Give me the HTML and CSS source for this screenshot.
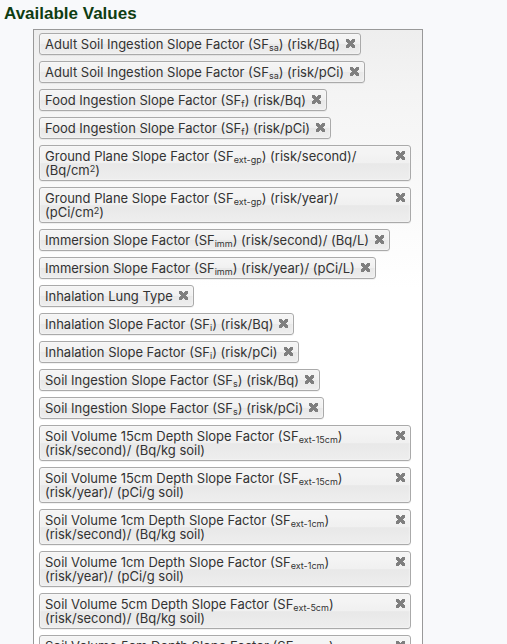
FILE: index.html
```html
<!DOCTYPE html>
<html>
<head>
<meta charset="utf-8">
<link rel="stylesheet" href="styles.css">
</head>
<body>
<h2 class="title">Available Values</h2>
<div class="choices">
  <div class="tag"><span class="label">Adult Soil Ingestion Slope Factor (SF<sub>sa</sub>) (risk/Bq)</span><span class="x"></span></div>
  <div class="tag"><span class="label">Adult Soil Ingestion Slope Factor (SF<sub>sa</sub>) (risk/pCi)</span><span class="x"></span></div>
  <div class="tag"><span class="label">Food Ingestion Slope Factor (SF<sub>f</sub>) (risk/Bq)</span><span class="x"></span></div>
  <div class="tag"><span class="label">Food Ingestion Slope Factor (SF<sub>f</sub>) (risk/pCi)</span><span class="x"></span></div>
  <div class="tag wide"><span class="label">Ground Plane Slope Factor (SF<sub>ext-gp</sub>) (risk/second)/ (Bq/cm<sup>2</sup>)</span><span class="x"></span></div>
  <div class="tag wide"><span class="label">Ground Plane Slope Factor (SF<sub>ext-gp</sub>) (risk/year)/ (pCi/cm<sup>2</sup>)</span><span class="x"></span></div>
  <div class="tag"><span class="label">Immersion Slope Factor (SF<sub>imm</sub>) (risk/second)/ (Bq/L)</span><span class="x"></span></div>
  <div class="tag"><span class="label">Immersion Slope Factor (SF<sub>imm</sub>) (risk/year)/ (pCi/L)</span><span class="x"></span></div>
  <div class="tag"><span class="label">Inhalation Lung Type</span><span class="x"></span></div>
  <div class="tag"><span class="label">Inhalation Slope Factor (SF<sub>i</sub>) (risk/Bq)</span><span class="x"></span></div>
  <div class="tag"><span class="label">Inhalation Slope Factor (SF<sub>i</sub>) (risk/pCi)</span><span class="x"></span></div>
  <div class="tag"><span class="label">Soil Ingestion Slope Factor (SF<sub>s</sub>) (risk/Bq)</span><span class="x"></span></div>
  <div class="tag"><span class="label">Soil Ingestion Slope Factor (SF<sub>s</sub>) (risk/pCi)</span><span class="x"></span></div>
  <div class="tag wide"><span class="label">Soil Volume 15cm Depth Slope Factor (SF<sub>ext-15cm</sub>) (risk/second)/ (Bq/kg soil)</span><span class="x"></span></div>
  <div class="tag wide"><span class="label">Soil Volume 15cm Depth Slope Factor (SF<sub>ext-15cm</sub>) (risk/year)/ (pCi/g soil)</span><span class="x"></span></div>
  <div class="tag wide"><span class="label">Soil Volume 1cm Depth Slope Factor (SF<sub>ext-1cm</sub>) (risk/second)/ (Bq/kg soil)</span><span class="x"></span></div>
  <div class="tag wide"><span class="label">Soil Volume 1cm Depth Slope Factor (SF<sub>ext-1cm</sub>) (risk/year)/ (pCi/g soil)</span><span class="x"></span></div>
  <div class="tag wide"><span class="label">Soil Volume 5cm Depth Slope Factor (SF<sub>ext-5cm</sub>) (risk/second)/ (Bq/kg soil)</span><span class="x"></span></div>
  <div class="tag wide"><span class="label">Soil Volume 5cm Depth Slope Factor (SF<sub>ext-5cm</sub>) (risk/year)/ (pCi/g soil)</span><span class="x"></span></div>
</div>
</body>
</html>
```
FILE: styles.css
```css
html, body {
  margin: 0;
  padding: 0;
  background: #f8f9fb;
}
body {
  padding: 4px 4px 0 4px;
  font-family: Inter, "Liberation Sans", sans-serif;
}
.title {
  margin: 0;
  font-family: "Liberation Sans", Arial, sans-serif;
  font-weight: bold;
  font-size: 17px;
  line-height: 20px;
  color: #0f3d12;
}
.choices {
  margin: 5px 0 0 29px;
  width: 372px;
  padding: 3px 11px 4px 5px;
  border: 1px solid #999;
  background-image: linear-gradient(#eeeeee 0%, #f4f4f4 10%, #ffffff 40%);
  display: flex;
  flex-direction: column;
  align-items: flex-start;
  gap: 6px;
}
.tag {
  display: flex;
  align-items: flex-start;
  max-width: 100%;
  box-sizing: border-box;
  padding: 3px 5px 3px 5px;
  border: 1px solid #aaa;
  border-radius: 3px;
  background-image: linear-gradient(#f4f4f4 20%, #f0f0f0 50%, #e8e8e8 52%, #eeeeee 100%);
  box-shadow: inset 0 0 2px #fff, 0 1px 0 rgba(0,0,0,.05);
  color: #333;
  font-size: 13px;
  line-height: 14px;
}
.tag.wide {
  width: 100%;
}
.label {
  flex: 1 1 auto;
}
sub, sup {
  font-size: 9px;
  line-height: 0;
}
sub { vertical-align: -2px; }
sup { vertical-align: 3px; }
.x {
  flex: 0 0 auto;
  width: 9px;
  height: 9px;
  margin: 2px 0 0 6px;
  background:
    linear-gradient(45deg, transparent 38%, #7f7f7f 38%, #7f7f7f 62%, transparent 62%),
    linear-gradient(-45deg, transparent 38%, #7f7f7f 38%, #7f7f7f 62%, transparent 62%);
}
```
